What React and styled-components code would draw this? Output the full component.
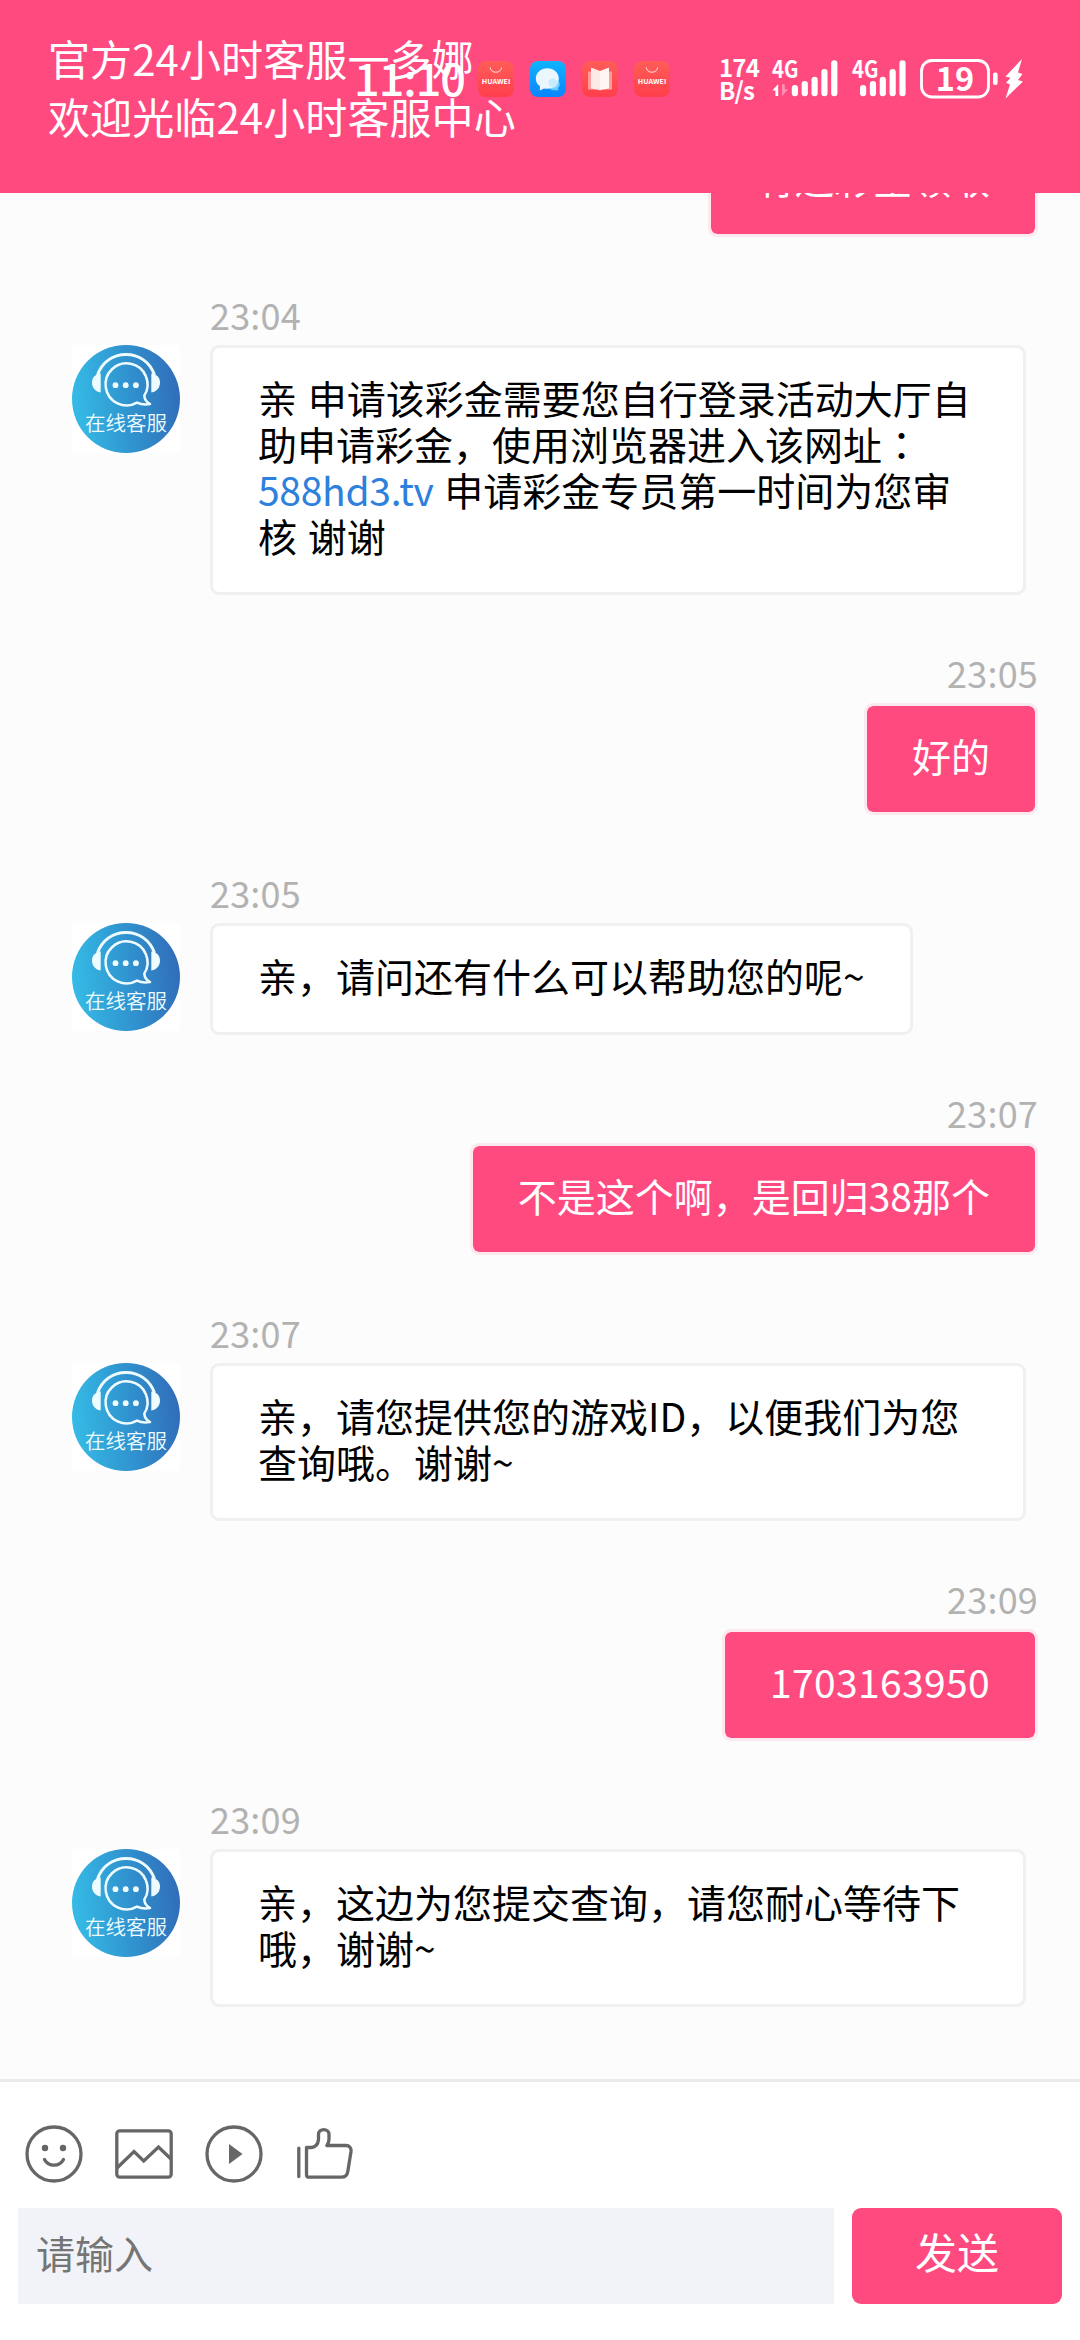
import React from "react";
import styled, { createGlobalStyle, css } from "styled-components";

const PINK = "#ff4a80";

const GlobalStyle = createGlobalStyle`
  * { box-sizing: border-box; }
  body {
    margin: 0;
    font-family: "Noto Sans CJK SC", "Noto Sans", sans-serif;
    background: #fff;
    text-size-adjust: none;
  }
  svg { display: block; overflow: visible; }
`;

const Screen = styled.div`
  position: relative;
  display: flex;
  flex-direction: column;
  width: 1080px;
  height: 2340px;
  overflow: hidden;
`;

const Header = styled.header`
  flex: none;
  height: 192.5px;
  padding: 28.5px 48px 0;
  background: ${PINK};
  color: #fff;
  font-size: 42px;
  line-height: 58.5px;
  white-space: nowrap;
`;

const HeaderLine = styled.div`
  letter-spacing: 0.1px;
`;

/* System status bar floating over the header */
const StatusBar = styled.div`
  position: absolute;
  top: 56px;
  left: 354px;
  right: 57px;
  height: 46px;
  display: flex;
  align-items: center;
  color: #fff;
`;

const Clock = styled.span`
  width: 124px;
  padding-bottom: 4px;
  font-size: 45px;
  font-weight: 500;
  line-height: 46px;
  letter-spacing: -1px;
`;

const AppIcons = styled.div`
  display: flex;
  gap: 16px;
  flex: 1;
`;

const NetSpeed = styled.div`
  width: 53px;
  padding-bottom: 3px;
  font-size: 24px;
  font-weight: 700;
  line-height: 23px;
  letter-spacing: -0.8px;
  text-align: left;
`;

const SignalWrap = styled.div`
  width: ${(p) => p.$w}px;
`;

const Chat = styled.main`
  flex: 1;
  min-height: 0;
  display: flex;
  flex-direction: column;
  justify-content: flex-end;
  gap: 55px;
  padding: 0 42px 72px 72px;
  background: #fcfcfc;
  overflow: hidden;
`;

const Message = styled.div`
  flex: none;
  display: flex;
  align-items: flex-end;
  flex-direction: column;
  ${(p) =>
    p.$agent &&
    css`
      align-items: flex-start;
    `}
`;

const Time = styled.time`
  height: 44px;
  margin-bottom: 9px;
  padding-left: ${(p) => (p.$agent ? 138 : 0)}px;
  color: #b2b2b2;
  font-size: 36px;
  line-height: 44px;
  letter-spacing: 0.2px;
`;

const Row = styled.div`
  display: flex;
  align-items: flex-start;
  gap: 30px;
`;

const AvatarBox = styled.div`
  flex: none;
  width: 108px;
  height: 108px;
  background: #fff;
`;

const Bubble = styled.div`
  max-width: 816px;
  padding: 25.5px 45px 34.5px;
  border: 3px solid ${(p) => (p.$agent ? "#f0f0f0" : "#fce8ef")};
  border-radius: 9px;
  background: ${(p) => (p.$agent ? "#fff" : PINK)};
  background-clip: padding-box;
  color: ${(p) => (p.$agent ? "#000" : "#fff")};
  font-size: 39px;
  line-height: 46px;
  word-spacing: 2px;
  letter-spacing: ${(p) => p.$spacing || 0}px;
  white-space: nowrap;
  ${(p) => p.$wide && "width: 816px;"}
`;

const Link = styled.a`
  color: #2d80dc;
  letter-spacing: -0.3px;
`;

/* Full-width colon set in the middle of its square */
const CenteredMark = styled.span`
  font-family: "Noto Sans CJK TC", sans-serif;
`;

const Footer = styled.footer`
  flex: none;
  height: 261px;
  border-top: 3px solid #ebebeb;
  background: #fff;
  padding: 42px 18px 36px;
  display: flex;
  flex-direction: column;
  justify-content: space-between;
`;

const Tools = styled.div`
  display: flex;
  gap: 30px;
  padding-left: 6px;
`;

const Tool = styled.svg`
  width: 60px;
  height: 60px;
  fill: none;
  stroke: #666;
  stroke-width: 3.3;
`;

const Compose = styled.div`
  display: flex;
  gap: 18px;
  height: 96px;
`;

const Input = styled.input`
  flex: 1;
  min-width: 0;
  border: 0;
  padding: 0 18px 8px;
  background: #f2f3f8;
  font: inherit;
  font-size: 39px;
  outline: none;
  &::placeholder {
    color: #757575;
    opacity: 1;
  }
`;

const Send = styled.button`
  width: 210px;
  border: 0;
  border-radius: 9px;
  padding: 0 0 11px;
  background: ${PINK};
  color: #fff;
  font: inherit;
  font-size: 42px;
`;

function HuaweiIcon() {
  return (
    <svg width="36" height="36" viewBox="0 0 36 36">
      <defs>
        <linearGradient id="hw" x1="0" y1="0" x2="0" y2="1">
          <stop offset="0" stopColor="#ff5d58" />
          <stop offset="1" stopColor="#ff3f4b" />
        </linearGradient>
      </defs>
      <rect width="36" height="36" rx="8" fill="url(#hw)" />
      <path d="M12.2 6.5a5.8 5.8 0 0 0 11.4 0" fill="none" stroke="#ffe3e3" strokeWidth="1" />
      <text x="3.8" y="23.2" fontSize="6.6" fontWeight="700" fill="#fff" textLength="28.6" lengthAdjust="spacingAndGlyphs">
        HUAWEI
      </text>
    </svg>
  );
}

function MessagesIcon() {
  return (
    <svg width="36" height="36" viewBox="0 0 36 36">
      <defs>
        <linearGradient id="msg" x1="0" y1="0" x2="0" y2="1">
          <stop offset="0" stopColor="#0fb4ff" />
          <stop offset="1" stopColor="#0a84ff" />
        </linearGradient>
      </defs>
      <rect width="36" height="36" rx="8" fill="url(#msg)" />
      <path d="M27 18.5a5.3 5.3 0 0 1 1 8.6l.4 2.2h-5a6 6 0 0 1-5-4z" fill="#6fd0ff" />
      <path d="M17.3 7.2c6.5 0 11.5 4.6 11.5 10.3s-5 10.3-11.5 10.3c-1.2 0-2.3-.1-3.3-.4l-4.2 2.1.2-4.2C7.4 23.5 5.8 20.7 5.8 17.5 5.8 11.8 10.9 7.2 17.3 7.2z" fill="#eaf7ff" />
      <circle cx="23" cy="22" r="4.6" fill="#c8ebff" />
    </svg>
  );
}

function BooksIcon() {
  return (
    <svg width="36" height="36" viewBox="0 0 36 36">
      <rect width="36" height="36" rx="8" fill="url(#hw)" />
      <path d="M6 10.5h24v18H20l-2 1.5-2-1.5H6z" fill="#ff9c9c" />
      <path d="M9 6.5l9 3.5v19l-9-1.5z" fill="#ffe9e6" />
      <path d="M27 6.5L18 10v19l9-1.5z" fill="#fff5f2" />
    </svg>
  );
}

const BAR_TOPS = [25, 21, 16.8, 9, 0.2];

function Signal({ data }) {
  const offset = data ? 19.8 : 8;
  return (
    <svg width="68" height="38" viewBox="0 0 68 38">
      <text x="0" y="17.8" fontSize="24" fontWeight="700" fill="#fff" textLength="26.5" lengthAdjust="spacingAndGlyphs">
        4G
      </text>
      {data && (
        <>
          <path d="M0.3 30.5L6.2 24v12H3.400V30.500z" fill="#fff" />
          <path d="M10 36.3l6.200-7h-3.400v-5H10z" fill="#ff8db3" />
        </>
      )}
      {BAR_TOPS.map((top, i) => (
        <rect key={top} x={offset + i * 9.85} y={top} width="6.2" height={36.3 - top} rx="3" fill="#fff" />
      ))}
    </svg>
  );
}

function Battery() {
  return (
    <svg width="103" height="42" viewBox="0 0 103 42">
      <rect x="1.5" y="2.5" width="67" height="36.5" rx="10.5" fill="none" stroke="#fff" strokeWidth="2.8" />
      <text x="35" y="32.6" fontSize="32.500" fontWeight="700" fill="#fff" textAnchor="middle">
        19
      </text>
      <rect x="73" y="14.5" width="4.6" height="12.5" rx="2" fill="#fff" />
      <path d="M102 1L85.5 18.5l5 1.2-4.5 5 4 1.8L85.5 40.5 103 23.5l-5-1.5 4.5-6-4.5-1.500z" fill="#fff" />
    </svg>
  );
}

function Avatar() {
  return (
    <AvatarBox>
      <svg width="108" height="108" viewBox="0 0 108 108">
        <defs>
          <linearGradient id="av" x1="0" y1="0.55" x2="1" y2="0.45">
            <stop offset="0" stopColor="#36bce6" />
            <stop offset="0.5" stopColor="#3095d0" />
            <stop offset="1" stopColor="#316db9" />
          </linearGradient>
        </defs>
        <circle cx="54" cy="54" r="54" fill="url(#av)" />
        <g fill="none" stroke="#effcff" strokeWidth="2.5">
          <path d="M25.5 30C30 17 41 9.5 54 9.5S78 17 82.5 30" strokeWidth="3" />
          <path d="M72.3 50.6A21 21 0 1 0 65 57.6c3.5 1.7 8 2.3 13 1.4-3.7-2-5.5-4.9-5.7-8.4z" strokeLinejoin="round" />
        </g>
        <g fill="#effcff">
          <path d="M28.7 28.5v19C22.5 46.5 20 42 20 37.5S23 29 28.7 28.5z" />
          <path d="M79.3 28.5v19C85.5 46.5 88 42 88 37.5S85 29 79.3 28.5z" />
          <circle cx="43.5" cy="40.2" r="2.9" />
          <circle cx="53.7" cy="40.2" r="2.9" />
          <circle cx="63.9" cy="40.2" r="2.9" />
          <text x="54" y="86" fontSize="20.5" fontWeight="350" textAnchor="middle">
            在线客服
          </text>
        </g>
      </svg>
    </AvatarBox>
  );
}

function AgentMessage({ time, wide, children }) {
  return (
    <Message $agent>
      <Time $agent>{time}</Time>
      <Row>
        <Avatar />
        <Bubble $agent $wide={wide}>{children}</Bubble>
      </Row>
    </Message>
  );
}

function UserMessage({ time, spacing, children }) {
  return (
    <Message>
      <Time>{time}</Time>
      <Bubble $spacing={spacing}>{children}</Bubble>
    </Message>
  );
}

export default function App() {
  return (
    <>
      <GlobalStyle />
      <Screen>
        <Header>
          <HeaderLine>官方24小时客服一多娜</HeaderLine>
          <HeaderLine>欢迎光临24小时客服中心</HeaderLine>
        </Header>
        <StatusBar>
          <Clock>11:10</Clock>
          <AppIcons>
            <HuaweiIcon />
            <MessagesIcon />
            <BooksIcon />
            <HuaweiIcon />
          </AppIcons>
          <NetSpeed>
            174
            <br />
            B/s
          </NetSpeed>
          <SignalWrap $w={80}>
            <Signal data />
          </SignalWrap>
          <SignalWrap $w={68}>
            <Signal />
          </SignalWrap>
          <Battery />
        </StatusBar>

        <Chat>
          <UserMessage time="23:04">有送彩金领取</UserMessage>
          <AgentMessage time="23:04" wide>
            亲 申请该彩金需要您自行登录活动大厅自
            <br />
            助申请彩金，使用浏览器进入该网址<CenteredMark lang="zh-TW">：</CenteredMark>
            <br />
            <Link>588hd3.tv</Link> 申请彩金专员第一时间为您审
            <br />核 谢谢
          </AgentMessage>
          <UserMessage time="23:05">好的</UserMessage>
          <AgentMessage time="23:05">亲，请问还有什么可以帮助您的呢~</AgentMessage>
          <UserMessage time="23:07">不是这个啊，是回归38那个</UserMessage>
          <AgentMessage time="23:07" wide>
            亲，请您提供您的游戏ID，以便我们为您
            <br />
            查询哦。谢谢~
          </AgentMessage>
          <UserMessage time="23:09" spacing={0.35}>1703163950</UserMessage>
          <AgentMessage time="23:09" wide>
            亲，这边为您提交查询，请您耐心等待下
            <br />
            哦，谢谢~
          </AgentMessage>
        </Chat>

        <Footer>
          <Tools>
            <Tool viewBox="0 0 60 60">
              <circle cx="30" cy="30" r="27" />
              <circle cx="21" cy="24" r="3.2" fill="#666" stroke="none" />
              <circle cx="39" cy="24" r="3.2" fill="#666" stroke="none" />
              <path d="M20.5 35.5c4 7.6 15 7.6 19 0" strokeLinecap="round" />
            </Tool>
            <Tool viewBox="0 0 60 60">
              <rect x="2.8" y="6.8" width="54.4" height="46.4" rx="3" />
              <path d="M3 44L20 27.500l9.700 9.500L44.500 23 57 35" />
            </Tool>
            <Tool viewBox="0 0 60 60">
              <circle cx="30" cy="30" r="27" />
              <path d="M25 20v20l13.500-10z" fill="#666" stroke="none" />
            </Tool>
            <Tool viewBox="0 0 60 60">
              <path d="M4.800 24.200v28.300" strokeLinecap="round" />
              <path d="M12.500 23.500h5c4.500-.5 6.500-3 7-8V10.500c0-6.500 10.500-6.500 10.500 0V15c0 2.800-.8 4.800-2.200 6.500H52c3.500 0 5.400 2.500 5 6l-3.200 20c-.6 3.700-2.800 5.700-6.300 5.700H15c-1.800 0-2.500-.9-2.500-2.500z" strokeLinejoin="round" />
            </Tool>
          </Tools>
          <Compose>
            <Input placeholder="请输入" />
            <Send>发送</Send>
          </Compose>
        </Footer>
      </Screen>
    </>
  );
}
